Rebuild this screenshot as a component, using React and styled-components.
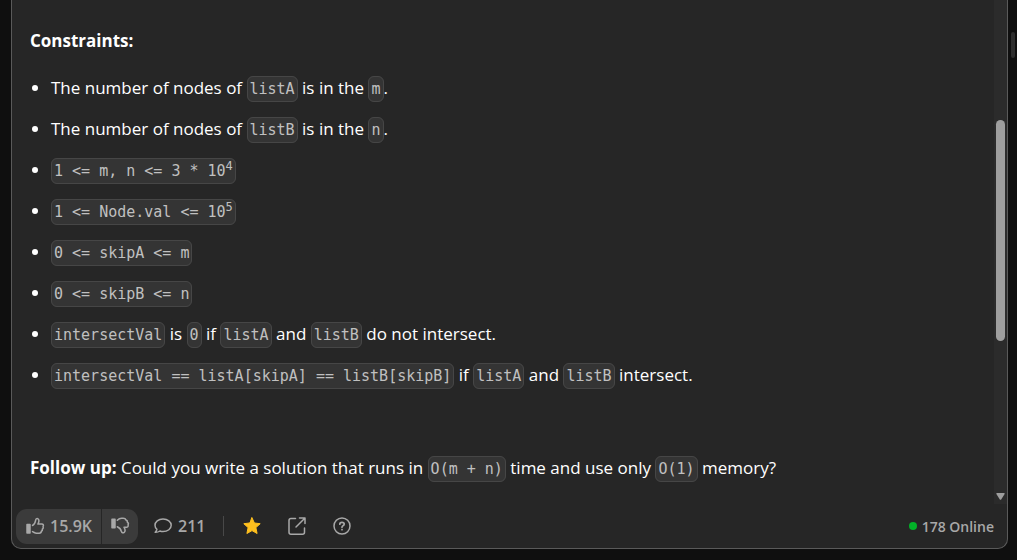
import React from 'react';
import styled, { createGlobalStyle } from 'styled-components';

const GlobalStyle = createGlobalStyle`
  *, *::before, *::after { box-sizing: border-box; }
  body {
    margin: 0;
    background: #0f0f0f;
    color: #fff;
    font-family: "Open Sans", "Noto Sans", sans-serif;
    font-size: 17px;
    line-height: 25px;
  }
`;

const Page = styled.div`
  display: flex;
  min-height: 100vh;
  padding: 0 1px 11px 11px;
`;

const Panel = styled.main`
  flex: 1;
  min-width: 0;
  display: flex;
  flex-direction: column;
  border: 1px solid #5a5a5a;
  border-top: none;
  border-radius: 0 0 10px 10px;
  background: #262626;
`;

const Gutter = styled.div`
  width: 8px;
  padding: 32px 0 0 3px;
`;

const GutterThumb = styled.div`
  width: 4px;
  height: 26px;
  border-radius: 2px;
  background: #2e2e2e;
`;

const Body = styled.div`
  flex: 1;
  display: flex;
`;

const Article = styled.article`
  flex: 1;
  min-width: 0;
  padding: 28px 18px 20px;
`;

const Paragraph = styled.p`
  margin: 0;
`;

const List = styled.ul`
  margin: 22px 0 68px;
  padding: 0 0 0 21px;
  display: flex;
  flex-direction: column;
  gap: 16px;
`;

const Code = styled.code`
  padding: 3px 2px;
  border: 1px solid #464646;
  border-radius: 6px;
  background: #343434;
  color: #c0c0c0;
  font-family: "DejaVu Sans Mono", monospace;
  font-size: 15px;
  line-height: 16px;
  white-space: nowrap;
`;

const Sup = styled.sup`
  font-size: 12px;
  line-height: 0;
`;

const Track = styled.div`
  width: 13px;
  display: flex;
  flex-direction: column;
  align-items: center;
  background: #2b2b2b;
`;

const Space = styled.div`
  flex: ${(p) => p.$grow} 0 0;
`;

const Thumb = styled.div`
  flex: 221 0 0;
  width: 9px;
  border-radius: 5px;
  background: #9e9e9e;
`;

const ArrowDown = styled.svg`
  width: 9px;
  height: 7px;
  margin-bottom: 4px;
  fill: #9e9e9e;
`;

const Footer = styled.footer`
  display: flex;
  align-items: center;
  height: 44px;
  padding: 0 13px 0 4px;
  color: #a8a8a8;
  font-size: 16px;
  font-weight: 600;
`;

const Votes = styled.div`
  display: flex;
  gap: 1px;
  border-radius: 11px;
  overflow: hidden;
`;

const Button = styled.button`
  display: flex;
  align-items: center;
  gap: 5px;
  height: 35px;
  padding: 0 ${(p) => p.$pad || 0}px;
  border: none;
  background: ${(p) => (p.$filled ? '#3b3b3b' : 'transparent')};
  color: inherit;
  font: inherit;
  cursor: pointer;
`;

const CommentButton = styled(Button)`
  padding-left: 15px;
`;

const Icon = styled.svg`
  display: block;
  width: 20px;
  height: 20px;
  fill: none;
  stroke: currentColor;
  stroke-width: 1.5;
  stroke-linecap: round;
  stroke-linejoin: round;
`;

const Divider = styled.div`
  width: 1px;
  height: 20px;
  margin: 0 18px 0 17px;
  background: #484848;
`;

const Tools = styled.div`
  display: flex;
  gap: 25px;
`;

const Online = styled.div`
  display: flex;
  align-items: center;
  gap: 5px;
  margin-left: auto;
  font-size: 14px;
`;

const Dot = styled.span`
  width: 8px;
  height: 8px;
  border-radius: 50%;
  background: #02b128;
`;

const ThumbUp = () => (
  <Icon viewBox="0 0 20 20">
    <path d="M2 8.500h3v8.500h-3z" fill="currentColor" />
    <path d="M7.500 9.500C9.500 8.500 10.200 6.800 10.600 4.300C10.900 2.500 12.300 2.200 13.200 3C14.300 4 13.800 6.300 12.900 8H16.700C18.400 8 18.900 9.500 18 10.600C18.500 11.500 18.200 12.600 17.300 13.100C17.600 14.100 17.100 15 16.300 15.300C16.300 16.600 15.500 17.200 14.300 17.200H11.500C10 17.200 9 16.300 7.500 15.600" />
  </Icon>
);

const ThumbDown = () => (
  <Icon viewBox="0 0 20 20">
    <path d="M2 3.200h3v8.500h-3z" fill="currentColor" />
    <path d="M7.300 4.300C8.500 3 9.800 2.200 11.600 2.200H13.200C14.500 2.200 15.600 2.800 15.900 4C17 4.300 17.500 5.200 17.300 6.200C18.300 6.800 18.600 7.900 18.100 8.900C18.500 10.200 17.700 11.300 16.400 11.300L14 11.200C15.200 13.300 15.300 15.500 14.200 16.400C13 17.300 11.700 16.700 11.300 15.300C10.900 13.200 9.600 11.700 7.300 10.700" />
  </Icon>
);

export default function App() {
  return (
    <>
      <GlobalStyle />
      <Page>
        <Panel>
          <Body>
            <Article>
              <Paragraph><strong>Constraints:</strong></Paragraph>
              <List>
                <li>The number of nodes of <Code>listA</Code> is in the <Code>m</Code>.</li>
                <li>The number of nodes of <Code>listB</Code> is in the <Code>n</Code>.</li>
                <li><Code>1 &lt;= m, n &lt;= 3 * 10<Sup>4</Sup></Code></li>
                <li><Code>1 &lt;= Node.val &lt;= 10<Sup>5</Sup></Code></li>
                <li><Code>0 &lt;= skipA &lt;= m</Code></li>
                <li><Code>0 &lt;= skipB &lt;= n</Code></li>
                <li><Code>intersectVal</Code> is <Code>0</Code> if <Code>listA</Code> and <Code>listB</Code> do not intersect.</li>
                <li><Code>intersectVal == listA[skipA] == listB[skipB]</Code> if <Code>listA</Code> and <Code>listB</Code> intersect.</li>
              </List>
              <Paragraph>
                <strong>Follow up:</strong> Could you write a solution that runs in <Code>O(m + n)</Code> time and use only <Code>O(1)</Code> memory?
              </Paragraph>
            </Article>
            <Track>
              <Space $grow={120} />
              <Thumb />
              <Space $grow={152} />
              <ArrowDown viewBox="0 0 9 7"><path d="M1 0h7q1 0 .6 1L5.200 6.400q-.7.8-1.400 0L.4 1Q0 0 1 0z" /></ArrowDown>
            </Track>
          </Body>
          <Footer>
            <Votes>
              <Button $filled $pad={9}>
                <ThumbUp />
                15.9K
              </Button>
              <Button $filled $pad={8} aria-label="Dislike">
                <ThumbDown />
              </Button>
            </Votes>
            <CommentButton>
              <Icon viewBox="0 0 20 20">
                <path d="M10 3C5.300 3 2 5.800 2 9.300C2 10.900 2.700 12.300 3.900 13.400C3.700 14.500 3 15.600 2.200 16.300C4.200 16.400 5.800 15.800 6.900 15C7.900 15.400 8.900 15.600 10 15.600C14.700 15.600 18.200 12.800 18.200 9.300C18.200 5.800 14.700 3 10 3Z" />
              </Icon>
              211
            </CommentButton>
            <Divider />
            <Tools>
              <Button aria-label="Favourite">
                <Icon viewBox="0 0 20 20">
                  <path d="M10 1.800L12.400 7L18.200 7.700L13.900 11.600L15.100 17.500L10 14.600L4.900 17.500L6.100 11.600L1.800 7.700L7.600 7Z" fill="#ffc01e" stroke="#ffc01e" strokeWidth="1" />
                </Icon>
              </Button>
              <Button aria-label="Share">
                <Icon viewBox="0 0 20 20">
                  <path d="M8.500 2.500H4Q2 2.500 2 4.500V16.200Q2 18.200 4 18.200H15.500Q17.500 18.200 17.500 16.200V12M12.500 2H18V7.500M18 2L9 11" />
                </Icon>
              </Button>
              <Button aria-label="Help">
                <Icon viewBox="0 0 20 20">
                  <circle cx="10" cy="10" r="8" />
                  <path d="M7.800 8.200Q7.800 6.300 10 6.300Q12.200 6.300 12.200 8.100Q12.200 9.200 11 9.800Q10 10.300 10 11.300M10 13.600V13.700" strokeWidth="1.700" />
                </Icon>
              </Button>
            </Tools>
            <Online><Dot />178 Online</Online>
          </Footer>
        </Panel>
        <Gutter><GutterThumb /></Gutter>
      </Page>
    </>
  );
}
